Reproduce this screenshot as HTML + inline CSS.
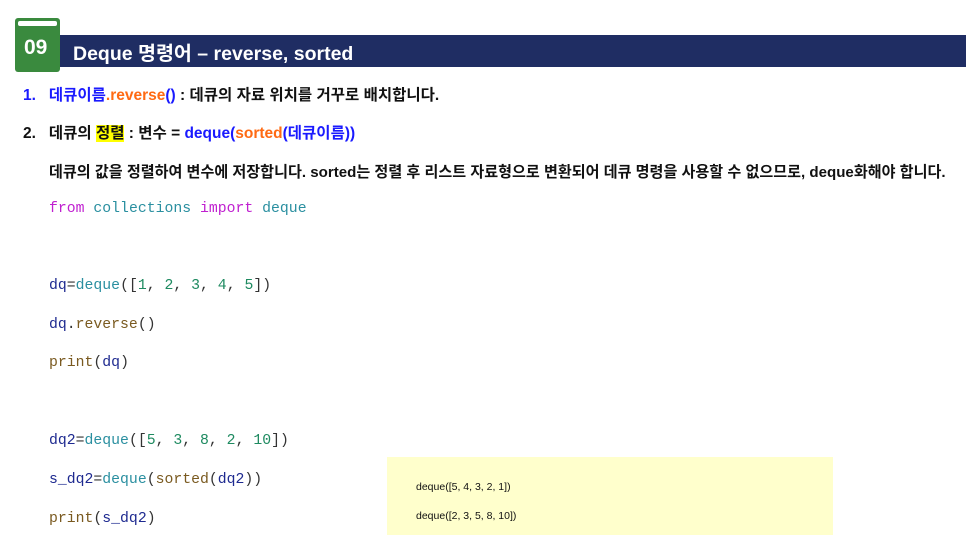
<!DOCTYPE html><html><head><meta charset="utf-8"><style>
body{margin:0;width:966px;height:543px;background:#fff;position:relative;overflow:hidden;font-family:"Liberation Sans","Noto Sans CJK KR",sans-serif}
.a{position:absolute;white-space:nowrap}
.k{font-weight:bold;font-size:15.5px;color:#111}
.c{font-family:"Liberation Mono",monospace;font-size:14.8px;color:#333}
.b{color:#1a1aff}.o{color:#ff6a13}.m{color:#c020d0}.t{color:#2a8fa0}.n{color:#1e8a60}.v{color:#1e2a90}.f{color:#7a5a20}
</style></head><body>
<div class="a" style="left:60px;top:35px;width:906px;height:32px;background:#1f2d63"></div>
<div class="a" style="left:15px;top:18px;width:45px;height:54px;background:#3a8a3e;border-radius:3px"></div>
<div class="a" style="left:18px;top:21px;width:39px;height:5px;background:#fff;border-radius:2px"></div>
<div class="a" style="left:24px;top:36px;color:#fff;font-weight:bold;font-size:21px">09</div>
<div class="a" style="left:73px;top:37px;color:#fff;font-weight:bold;font-size:19.5px">Deque 명령어 – reverse, sorted</div>
<div class="a k" style="left:23px;top:83px"><span class="b">1.&nbsp;&nbsp;&nbsp;데큐이름</span><span class="o">.reverse</span><span class="b">()</span> : 데큐의 자료 위치를 거꾸로 배치합니다.</div>
<div class="a k" style="left:23px;top:121px">2.&nbsp;&nbsp;&nbsp;데큐의 <span style="background:#ffff00">정렬</span> : 변수 = <span class="b">deque(</span><span class="o">sorted</span><span class="b">(데큐이름))</span></div>
<div class="a k" style="left:49px;top:160px;font-size:15.1px">데큐의 값을 정렬하여 변수에 저장합니다. sorted는 정렬 후 리스트 자료형으로 변환되어 데큐 명령을 사용할 수 없으므로, deque화해야 합니다.</div>
<div class="a c" style="left:49px;top:201px"><span class="m">from</span> <span class="t">collections</span> <span class="m">import</span> <span class="t">deque</span></div>
<div class="a c" style="left:49px;top:278px"><span class="v">dq</span>=<span class="t">deque</span>([<span class="n">1</span>, <span class="n">2</span>, <span class="n">3</span>, <span class="n">4</span>, <span class="n">5</span>])</div>
<div class="a c" style="left:49px;top:317px"><span class="v">dq</span>.<span class="f">reverse</span>()</div>
<div class="a c" style="left:49px;top:355px"><span class="f">print</span>(<span class="v">dq</span>)</div>
<div class="a c" style="left:49px;top:433px"><span class="v">dq2</span>=<span class="t">deque</span>([<span class="n">5</span>, <span class="n">3</span>, <span class="n">8</span>, <span class="n">2</span>, <span class="n">10</span>])</div>
<div class="a c" style="left:49px;top:472px"><span class="v">s_dq2</span>=<span class="t">deque</span>(<span class="f">sorted</span>(<span class="v">dq2</span>))</div>
<div class="a c" style="left:49px;top:511px"><span class="f">print</span>(<span class="v">s_dq2</span>)</div>
<div class="a" style="left:387px;top:457px;width:446px;height:78px;background:#ffffcc"></div>
<div class="a" style="left:416px;top:481px;font-size:10.5px;color:#111">deque([5, 4, 3, 2, 1])</div>
<div class="a" style="left:416px;top:510px;font-size:10.5px;color:#111">deque([2, 3, 5, 8, 10])</div>
</body></html>
